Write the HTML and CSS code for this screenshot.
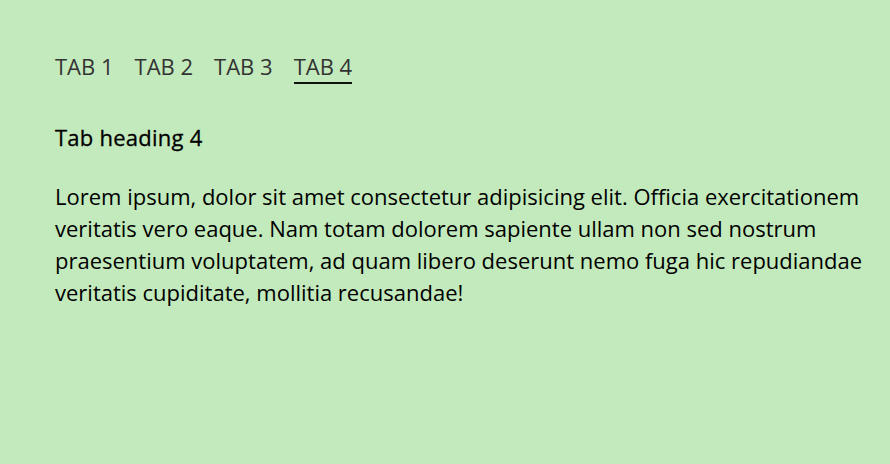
FILE: index.html
```html
<!DOCTYPE html>
<html>
<head>
<meta charset="utf-8">
<link rel="stylesheet" href="styles.css">
</head>
<body>
<div class="wrap">
  <nav class="tabs">
    <span class="tab">TAB 1</span>
    <span class="tab">TAB 2</span>
    <span class="tab">TAB 3</span>
    <span class="tab active">TAB 4</span>
  </nav>
  <h2 class="heading">Tab heading 4</h2>
  <p class="text">Lorem ipsum, dolor sit amet consectetur adipisicing elit. Officia exercitationem veritatis vero eaque. Nam totam dolorem sapiente ullam non sed nostrum praesentium voluptatem, ad quam libero deserunt nemo fuga hic repudiandae veritatis cupiditate, mollitia recusandae!</p>
</div>
</body>
</html>
```
FILE: styles.css
```css
html, body {
  margin: 0;
  padding: 0;
  background: #c3eabc;
  height: 100%;
}
body {
  font-family: "Open Sans", sans-serif;
  color: #000;
}
.wrap {
  padding: 51px 20px 0 55px;
}
.tabs {
  display: flex;
  gap: 21px;
  font-size: 22px;
  line-height: 30px;
  color: #333;
}
.tab {
  padding-bottom: 1px;
  border-bottom: 2px solid transparent;
}
.tab.active {
  border-bottom-color: #111;
}
.heading {
  margin: 38px 0 0;
  font-size: 22px;
  font-weight: 400;
  letter-spacing: 0.25px;
  -webkit-text-stroke: 0.3px #000;
  line-height: 30px;
}
.text {
  margin: 28px 0 0;
  font-size: 22px;
  line-height: 32px;
}
```
